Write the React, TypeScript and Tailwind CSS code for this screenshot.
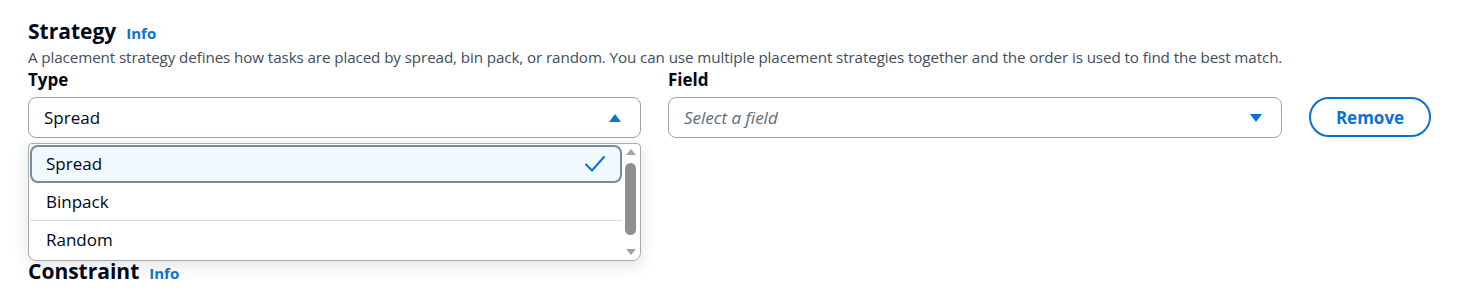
import { useState } from 'react';

const OPTIONS = ['Spread', 'Binpack', 'Random'];

const font = { fontFamily: '"Open Sans", "Noto Sans", Arial, sans-serif' };

function Caret({ up }: { up?: boolean }) {
  return (
    <svg width="14" height="10" viewBox="0 0 14 10" className="text-[#0972d3]">
      {up ? <path d="M1 9 L7 1 L13 9 Z" fill="currentColor" /> : <path d="M1 1 L7 9 L13 1 Z" fill="currentColor" />}
    </svg>
  );
}

function Check() {
  return (
    <svg width="22" height="18" viewBox="0 0 22 18" fill="none">
      <path d="M2 9.5 L8 15.5 L20 2" stroke="#0972d3" strokeWidth="2" strokeLinecap="round" strokeLinejoin="round" />
    </svg>
  );
}

function Info() {
  return <span className="text-[15px] font-bold text-[#0972d3] ml-2.5">Info</span>;
}

export default function App() {
  const [selected] = useState('Spread');

  return (
    <div className="w-[1460px] h-[290px] bg-white overflow-hidden text-[#000716] px-7 pt-4" style={font}>
      {/* ── Strategy header ── */}
      <div className="flex items-baseline">
        <h2 className="text-[21px] font-bold leading-[30px]">Strategy</h2>
        <Info />
      </div>
      <p className="text-[15.2px] leading-[22px] text-[#414d5c] tracking-[-0.1px]">
        A placement strategy defines how tasks are placed by spread, bin pack, or random. You can use multiple placement strategies together and the order is used to find the best match.
      </p>

      <div className="flex items-end gap-[27px] mt-[1px]">
        {/* Type */}
        <div className="w-[613px] relative">
          <div className="text-[17px] font-bold leading-[22px] mb-[6px]">Type</div>
          <button className="w-full h-[41px] flex items-center justify-between pl-[15px] pr-[18px] rounded-[8px] border border-[#a0a3a8] text-[17px]">
            <span>{selected}</span>
            <Caret up />
          </button>

          {/* dropdown menu */}
          <div className="absolute left-0 top-[74px] w-full h-[118px] bg-white border border-[#a7abb0] rounded-b-[8px] rounded-t-[4px] shadow-[0_4px_16px_rgba(0,7,22,0.12)] flex p-px z-10">
            <ul className="flex-1 flex flex-col">
              {OPTIONS.map((opt, i) => {
                const active = opt === selected;
                return (
                  <li key={opt}
                    className={`h-[38px] flex items-center justify-between text-[17px] ${
                      active ? 'bg-[#f0f9ff] border-2 border-[#7d8998] rounded-[8px] pl-[14px] pr-[14px]' : 'pl-4 pr-4'
                    } ${i === 1 ? 'border-b border-[#d5dbdb]' : ''}`}>
                    <span>{opt}</span>
                    {active && <Check />}
                  </li>
                );
              })}
            </ul>
            {/* scrollbar */}
            <div className="w-[17px] flex flex-col items-center justify-between py-[4px]">
              <svg width="10" height="6" viewBox="0 0 10 6"><path d="M0 6 L5 0 L10 6 Z" fill="#a3a3a3" /></svg>
              <div className="w-[11px] flex-1 mt-[8px] bg-[#8f8f8f] rounded-full mx-auto max-h-[72px] self-center mb-auto" />
              <svg width="10" height="6" viewBox="0 0 10 6"><path d="M0 0 L5 6 L10 0 Z" fill="#a3a3a3" /></svg>
            </div>
          </div>
        </div>

        {/* Field */}
        <div className="w-[614px]">
          <div className="text-[17px] font-bold leading-[22px] mb-[6px]">Field</div>
          <button className="w-full h-[41px] flex items-center justify-between pl-[15px] pr-[18px] rounded-[8px] border border-[#a0a3a8] text-[17px]">
            <span className="italic text-[#5f6b7a]">Select a field</span>
            <Caret />
          </button>
        </div>

        <button className="w-[122px] h-[40px] mb-[1px] pt-[2px] rounded-full border-2 border-[#0972d3] text-[#0972d3] font-bold text-[17px]">
          Remove
        </button>
      </div>

      {/* ── Constraint header ── */}
      <div className="flex items-baseline mt-[118px]">
        <h2 className="text-[21px] font-bold leading-[30px]">Constraint</h2>
        <Info />
      </div>
    </div>
  );
}
